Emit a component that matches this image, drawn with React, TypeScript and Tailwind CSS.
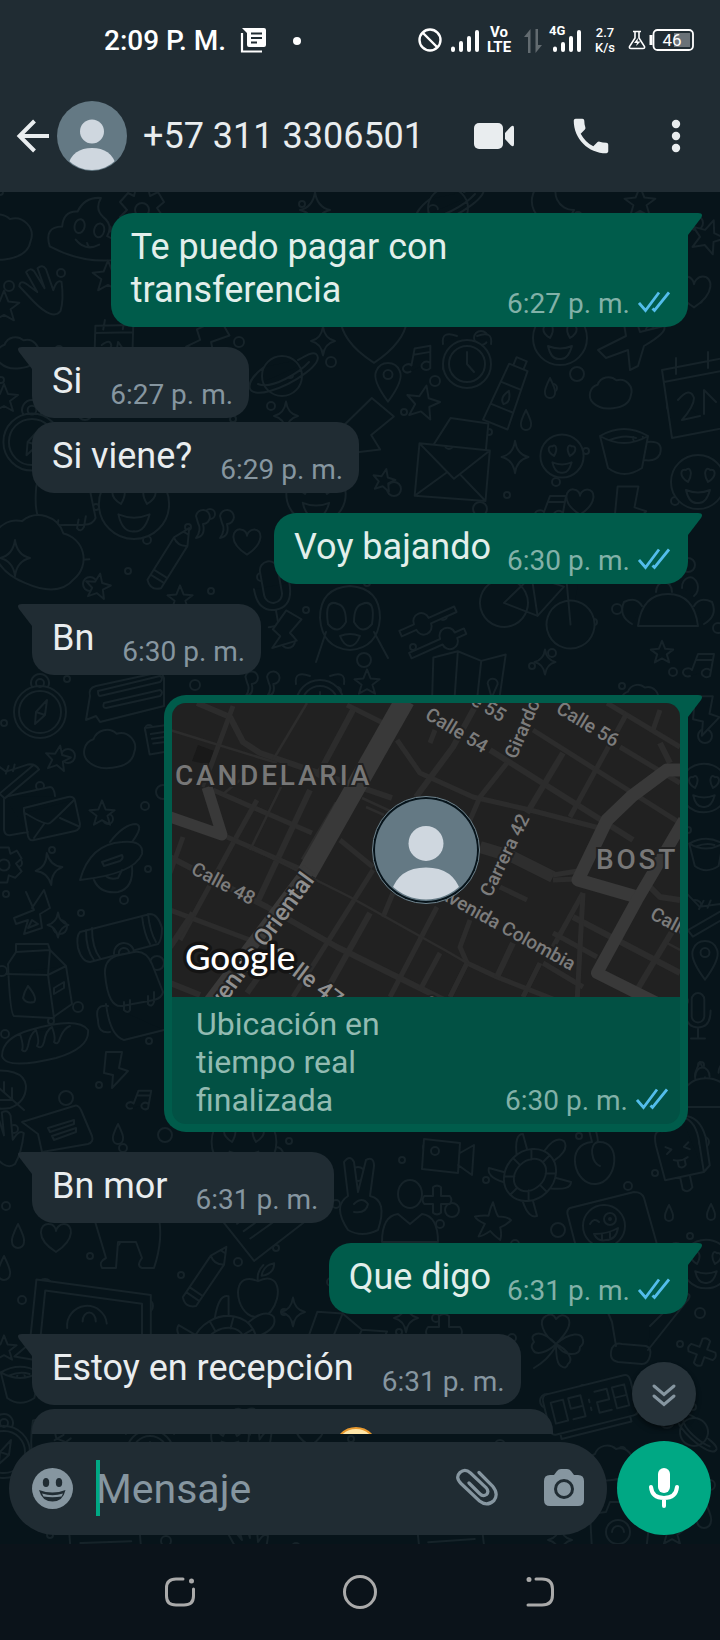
import React from "react";

/* ---------- chat wallpaper ---------- */

const shapes: Record<string, string> = {
  heart: "M0 14C-22 0-16-15-7-14C-2-14 0-9 0-7C0-9 3-14 8-14C17-14 20 1 0 14Z",
  star: "M0-14L4-4L14-3L6 3L9 13L0 8L-9 13L-6 3L-14-3L-4-4Z",
  starfish: "M0-22Q4-8 6-6Q16-6 20-2Q14 4 8 6Q10 14 8 20Q0 14-3 10Q-12 16-16 16Q-12 8-9 2Q-18-2-20-6Q-10-8-5-7Q-3-16 0-22Z",
  spark: "M0-18Q2-3 15 0Q2 3 0 18Q-2 3-15 0Q-2-3 0-18Z",
  drop: "M0-10Q6 2 5 5A5 5 0 0 1-5 5Q-6 2 0-10Z",
  cloud: "M-20 12A12 12 0 0 1-15-8A13 13 0 0 1 6-13A13 13 0 0 1 22 4Q20 16 2 18Q-12 20-20 12Z",
  planet:
    "M-20 0A20 20 0 1 1 20 0A20 20 0 1 1-20 0M-18-9C-40 8-36 22-12 15C12 8 44-14 34-22C30-25 22-19 16-16M-24 8C-10 14 18-4 27-14",
  envelope: "M-38-18L32-28L40 22L-30 34ZM-38-18L4 8L32-28M-30 34L-4 3M40 22L10 3M-24-20L-14-50L24-54L28-28",
  mail: "M-38-19L8-29Q12-29 13-20M-38-19V14Q-37 20-31 19L-14 16M-18-8L26-19Q32-20 33-15L38 8Q38 14 33 15L-8 24Q-13 25-14 20L-18-4Q-18-8-18-8ZM-17-3Q4 10 8 7Q12 4 32-16M-8 22L2 8M36 10L18 2",
  cup: "M-24-12Q0-26 24-12L18 20Q0 32-16 20ZM-24-12Q0 2 24-12M23-6Q40-8 36 6Q32 14 20 12M-14-8Q0-14 12-10",
  clock:
    "M-24 0A24 24 0 1 1 24 0A24 24 0 1 1-24 0M-18 0A18 18 0 1 1 18 0A18 18 0 1 1-18 0M0-12V0L7 8M-24-20Q-26-34-10-28M24-20Q26-34 10-28",
  smile:
    "M-27 0A27 27 0 1 1 27 0A27 27 0 1 1-27 0M-10 0C-20-6-17-14-12-12C-9-16-4-10-10 0M10 0C4-10 9-16 12-12C17-14 20-6 10 0M-12 8Q0 13 12 8Q8 22 0 21Q-9 22-12 8",
  wink: "M-21 0A21 21 0 1 1 21 0A21 21 0 1 1-21 0M-14-2Q-10-9-5-4M0-7A6 6 0 1 1 12-7A6 6 0 1 1 0-7M5-7A1 1 0 1 1 7-7A1 1 0 1 1 5-7M-10 8Q4 8 14 2Q12 14 2 14Q-6 16-10 8M-2 8V14M6 6V12",
  note: "M-10 8A5 4 0 1 1-8 2L-2-14H14L10 8A5 4 0 1 1 10 2M-4-8H13",
  pin: "M0 24Q-18 0-13-10A14 14 0 0 1 13-10Q18 0 0 24M-5-6A5 5 0 1 1 5-6A5 5 0 1 1-5-6",
  pencil: "M-8-24L0-40L8-24V26Q0 34-8 26ZM-8-24Q0-18 8-24M-8 14H8M-8 20H8M-3-34H3",
  tube: "M-9-30H9L12 26H-12ZM-5-30V-38H5V-30M-11 10H11M-10-12H10M0-7Q6 2 0 6Q-6 2 0-7",
  moon: "M8-22A22 22 0 1 0 22 8A18 18 0 0 1 8-22Z",
  plane: "M-32 8L-4-6L-8-30Q-2-38 4-28L10-10L34-16Q38-10 14 4L8 24L0 28L-2 8L-24 16Z",
  hand: "M-14 4L-24-14Q-22-20-17-15L-8-4L-14-26Q-9-30-6-25L0-6L-2-27Q4-30 6-24L8-2Q14-12 18-8Q16 10 10 20Q0 28-14 4Z",
  calendar: "M-32-22L30-34L40 34L-22 46ZM-30-10L32-22M-18-18V-34M14-24V-40M-16 8Q-4-6 0 6Q0 14-12 28L6 24M10 22V-2L22 10",
  bolt: "M-8-18H8L5-2L14 1L-2 18L-1 5L-10 3Z",
  bread: "M-42 14Q-42-4-14-12Q34-26 44-12Q46 6 12 16Q-38 28-42 14M-24-8Q-20 4-22 8Q-18 12-16 4Q-14-8-8-12Q-4 0-7 4Q-2 8 0 0Q2-12 8-15Q12-4 10 0Q14 4 16-4Q20-14 26-16",
  bag: "M-27-18Q-28-34-12-37L2-40Q14-42 20-28L31 0Q30 6 22 8L-10 14Q-24 16-27-18M-24 14Q-38 12-34 28Q-34 42-22 40M-26 12Q-22 44-8 48L32 38M-8 10V18Q-4 22-2 18V8M16 4V12Q20 16 22 10V0M-18-38A10 10 0 0 1 2-40M-13-38A5 5 0 0 1-3-40",
  roll: "M-40-8L30-26Q38-26 42-12Q42 0 38 4L-30 22Q-38 22-42 8Q-44-4-40-8M-34-10Q-34 10-26 20M-28-12Q-28 8-20 18M22-24Q24-6 30 4M28-26Q30-8 36 2",
  box: "M-26-20L-18-32L16-34L32-18L38 20L18 34L-20 32Q-24 30-26-20ZM-28-10L14-9L32-18M14-9L20 34M-18-32V-40H14L16-34M16-34L14-9M-6 2Q4 14 0 18Q-8 20-11 14Q-10 8-6 2M20 4L30-2V4L20 10Z",
  map: "M-36-18L-12-26L12-18L36-26L32 28L10 34L-12 26L-34 32ZM-12-26V26M12-18L10 34M20 4A5 5 0 1 1 30 4L25 18Z",
  bike: "M-58 12A24 24 0 1 1-10 12A24 24 0 1 1-58 12M12 12A24 24 0 1 1 60 12A24 24 0 1 1 12 12M-34 12L-16-22H18L2 14ZM36 12L18-30L30-34M-16-22L2 14M-26-30H-8",
  mic: "M-9-18A9 9 0 0 1 9-18V6A9 9 0 0 1-9 6ZM-18-2Q-18 22 0 22Q18 22 18-2M0 22V38M-10 38H10",
  camera: "M-28-14L-12-16L-8-26L12-26L16-14L32-12L28 24L-26 22ZM-12 4A12 12 0 1 1 12 4A12 12 0 1 1-12 4M-6 4A6 6 0 1 1 6 4",
  video: "M-24-18L12-14L10 16L-26 12ZM12-4L26-12L24 18L10 8M-17-6A4 4 0 1 1-9-6A4 4 0 1 1-17-6",
  turtle:
    "M-24 0A24 28 0 1 1 24 0A24 28 0 1 1-24 0M-14 0A14 18 0 1 1 14 0A14 18 0 1 1-14 0M-24 0H-14M24 0H14M0-28V-18M0 28V18M-17-19L-10-12M17-19L10-12M-17 19L-10 12M17 19L10 12M-7-28Q-10-46 0-48Q10-46 7-28M20-16L34-24Q40-18 24-5M20 16L34 24Q30 32 14 24M-20 16L-34 24Q-30 32-14 24M-20-16L-34-24Q-40-18-24-5",
  popsicle: "M-22 24L-24-16Q-24-34-14-30Q-10-44 4-42Q24-40 24-14L22 24ZM-5 24V38Q0 44 6 38V24M22 24L30 18L32-14Q30-40 10-42M-14-12L-8-8L-14-4M12-12L6-8L12-4M-8 4Q0 8 8 4M-4 6V12Q0 16 4 12V6",
  plum: "M-4-20C-32-18-22 24 0 22C22 20 26-22 2-20C-8-18-4 2 4 4M-4-20L-8-36Q0-40 2-20",
  apple: "M0-12C-26-24-28 10-12 24Q-4 30 0 26Q6 30 14 22C28 4 24-24 0-12M0-12Q-2-22 6-30M4-18Q18-20 18-32Q6-30 4-18",
  clover: "M0 0C-14-10-18-24-10-28Q-3-32 0-25Q6-32 12-26C16-20 10-10 0 0C14-12 26-12 27-4Q28 0 24 3Q24 10 16 10C8 10 4 6 0 0C12 6 18 16 12 20Q10 26 5 22Q0 20 0 0C-8 8-20 12-23 6Q-26 2-22-2Q-26-8-20-10C-14-12-6-6 0 0M0 2Q-8 16-22 24",
  dog: "M-30-10Q-34-34-10-36Q26-40 34-14Q40 10 30 40H18Q12 38 18 30L12 14H-6L-8 40H-22Q-26 34-18 30ZM-20-24L-14-18M34-14Q46-18 46-30",
  laptop: "M-56-44L48-30V30L-62 14ZM-48-34L40-22V20L-52 6ZM-28 0A18 18 0 1 1 8-4M-62 14L-76 26L30 44L48 30M-14-6A6 8 0 1 1-2-6",
  digital: "M-44-22H44Q50-22 50-14V18Q50 24 44 24H-44Q-50 24-50 18V-14Q-50-22-44-22M-42-12H-28V12H-42ZM-22-12H-8V0H-22ZM-8 0V12H-22M0-5V-2M0 4V7M8-12H22V0H8V12H22M28-12H42V12H28ZM28 0H42M-40 24V30H40V24",
  quote: "M-14-8A7 7 0 1 1-7 0Q-4 12-14 14Q-8 6-12-1ZM10-8A7 7 0 1 1 17 0Q20 12 10 14Q16 6 12-1Z",
  card: "M-32-20L26-28L34 14L-24 24ZM-22-10L16-16M-20-2L22-8M-18 6L12 2",
  chat: "M-34-4L-38 20L-28 16L-24 22L40 6V-22Q38-28 32-27L-28-14Q-36-12-34-4M-24-4L36-18Q40-22 36-24L-26-9Q-26-4-24-4M-18 8L36-4Q40-8 36-10L-20 3Q-22 8-18 8",
  note2: "M-40-2L12-18Q16-20 19-14L30 12Q32 18 26 20L-20 28L-24 10ZM-14 4L12-4V0L-12 8ZM-10 12L14 4V8L-8 16Z",
  rocket: "M-34 22Q-24-14 8-16Q30-18 28-4Q20 16-34 22M-4-16Q10-34 22-34Q30-32 18-16M-20 22Q-14 36 4 34Q20 30 18 8M-8 18Q-4 22 4 20L8 12M-12 4L8-3Q10 0 6 3L-10 8Z",
  rune: "M-6-18L2 0L-18 8L-16 14L-4 10L-8 24L10 18L8 4L18-2L12-20L0-2M-4 18L0 10L6 14Z",
  leaf: "M-26-16Q16-22 18-2Q18 14 2 20Q-10 22-22 18M-18-8L16 22M-4 4L-4-6M4 12V0M4 12H-8",
  sticker: "M-40-26L24-42Q32-42 34-36L48 14Q48 22 42 24L-18 42Q-26 42-28 36L-42-18Q-44-24-40-26",
  sliders: "M-30-8H-14A8 8 0 0 1 2-8H30V-2H2A8 8 0 0 1-14-2H-30ZM-30 16H4A8 8 0 0 1 20 16H30V22H20A8 8 0 0 1 4 22H-30Z",
  poop: "M-34 24Q-44 6-26 2Q-28-14-14-16Q-10-32 6-34Q2-22 12-16Q24-10 20 2Q40 6 32 24Q0 34-34 24M-14-2A5 7 0 1 1-4-2A5 7 0 1 1-14-2M6-2A5 7 0 1 1 16-2A5 7 0 1 1 6-2M-10 12Q2 22 14 12",
  gear: "M-6-22H6L8-14L16-18L22-8L15-2L22 8L14 16L6 13L4 22H-6L-8 13L-17 16L-22 7L-15 0L-22-8L-14-17L-8-14ZM-7 0A7 7 0 1 1 7 0A7 7 0 1 1-7 0",
  person: "M-12-18A12 14 0 1 1 12-18A12 14 0 1 1-12-18M-28 30Q-28 4-12 2L0 12L12 2Q28 4 28 30Z",
  monkey:
    "M-30-4Q-30-34 0-36Q30-34 30-4Q28 26 0 28Q-28 26-30-4M-22 2Q-26-24-12-18Q-4-16-4 0Q-12 14-22 2M22 2Q26-24 12-18Q4-16 4 0Q12 14 22 2M-10 14Q0 10 10 14Q6 24 0 24Q-6 24-10 14M-24 10L-34 40M24 10L38 36",
  compass:
    "M-26 0A26 26 0 1 1 26 0A26 26 0 1 1-26 0M-21 0A21 21 0 1 1 21 0A21 21 0 1 1-21 0M-5 12L-4 0L7-12L5 3ZM-4 0L5 3M-8-25A9 9 0 1 1 8-25M-4-29A4 4 0 1 1 4-29A4 4 0 1 1-4-29",
  salad: "M-30 10Q-26-22 0-22Q26-22 30 10ZM-36 8Q-50 0-44-14Q-32-20-26-10M36 8Q50 0 44-14Q32-20 26-10M-12-24A8 10 0 1 1 4-24M14-28A8 10 0 1 1 26-20",
  shoe: "M-30-24L-10-28L-4-4L26 8Q36 14 34 24H-30Q-34 0-30-24M-30 14H30M-6-2L4-8M4 2L12-4",
  peace: "M-14 34Q-30 10-14 0L-18-34Q-12-42-8-34L-4-4L4-36Q12-40 12-30L8 0Q26 4 16 34Q0 42-14 34M-8 8Q0 0 6 8Q4 18-8 16",
  glove: "M-20 18L-24-6L-36-34M12 22L50-26Q56-32 52-34Q48-36 14-2M-24 20Q-20 14-14 16L10 18Q16 20 14 28Q12 36 6 36L-18 34Q-28 32-24 20Z",
  cross: "M-5-16Q0-20 5-16V-5H16Q20 0 16 5H5V16Q0 20-5 16V5H-16Q-20 0-16-5H-5Z",
};

type Doodle = [string, number, number, number?, number?];

const doodles: Doodle[] = [
  ["cloud", 2, 44, 1.3], ["poop", 88, 38, 1, 12], ["gear", 142, 18], ["spark", 315, 18], ["planet", 448, 16], ["moon", 552, 10], ["star", 640, 10, 1.1],
  ["star", 708, 44, 1.2, 20], ["star", 108, 84, 1.1], ["hand", 46, 102, 1, -14], ["star", 4, 114, 1.1], ["heart", 694, 100, 1.1], ["calendar", 112, 150, 0.6, 10],
  ["cloud", 18, 160, 0.9], ["plane", 630, 150], ["smile", 560, 146], ["spark", 323, 149, 0.8], ["heart", 374, 140, 2.2], ["bolt", 206, 146, 1.2, 60],
  ["planet", 282, 184], ["note", 419, 170, 1, -10], ["clock", 467, 172], ["pin", 388, 188, 0.9], ["tube", 506, 206, 1.1, 22], ["drop", 550, 196], ["cloud", 611, 200, 0.9],
  ["calendar", 694, 200], ["star", 423, 210, 1.2, 12], ["star", 4, 206], ["spark", 286, 224, 0.8], ["bolt", 362, 240, 1.8, 40], ["drop", 526, 228], ["compass", 32, 250, 1.1],
  ["envelope", 452, 278, 1, 14], ["spark", 515, 265, 0.9], ["smile", 562, 264, 0.8], ["cup", 624, 256], ["star", 384, 288, 0.8, 12], ["smile", 698, 290], ["bag", 62, 320, 1.1, 10],
  ["smile", 316, 302, 1.1], ["heart", 580, 310, 0.9], ["note", 552, 318], ["bolt", 628, 318, 1.3], ["smile", 134, 312, 1.3], ["cloud", 40, 358, 2, 30],
  ["quote", 210, 332], ["heart", 247, 350, 0.9], ["pencil", 168, 370, 1, 32], ["spark", 15, 366], ["star", 98, 394, 0.9, 10], ["star", 180, 406, 0.9], ["mic", 272, 396, 1, -10],
  ["monkey", 350, 430, 1], ["bike", 540, 410, 1, 18], ["salad", 668, 424], ["sliders", 430, 434, 1, -24], ["bolt", 284, 440, 1.1, 30], ["map", 468, 486, 1, 4],
  ["spark", 545, 470, 0.7], ["star", 662, 460, 0.8], ["star", 367, 490, 0.9], ["quote", 258, 492, 0.9], ["clock", 320, 512], ["cloud", 640, 506, 0.8], ["note", 700, 476],
  ["compass", 40, 520], ["chat", 124, 508], ["cloud", 110, 556, 1.1], ["star", 58, 566, 0.9, 10], ["card", 164, 548, 0.6], ["mail", 42, 624], ["star", 102, 621, 0.9], ["shoe", 10, 580, 0.7, -40],
  ["gear", 4, 673, 0.8], ["spark", 49, 677, 0.9, -8], ["rocket", 114, 666], ["rune", 32, 718], ["spark", 58, 733, 0.7], ["roll", 120, 748], ["box", 34, 792], ["bag", 132, 800],
  ["bread", 44, 850], ["bolt", 114, 878], ["leaf", 8, 896], ["note", 140, 910, 0.8], ["note2", 62, 932], ["drop", 118, 942], ["hand", 4, 950, 1.1],
  ["bolt", 704, 524, 1.1], ["smile", 704, 596, 0.9], ["cup", 706, 660, 0.7], ["shoe", 704, 716, 0.8, -30], ["pin", 705, 766, 0.9],
  ["mic", 698, 820, 0.7], ["drop", 700, 880], ["salad", 706, 906, 0.9], ["smile", 244, 950, 1.2], ["video", 448, 965], ["turtle", 530, 983, 1, 45], ["plum", 596, 970],
  ["popsicle", 680, 963, 0.9, -12], ["peace", 362, 1004], ["person", 410, 1020], ["cross", 437, 1008, 0.8], ["starfish", 493, 1030, 0.9], ["sticker", 610, 1042], ["wink", 604, 1034],
  ["drop", 669, 1021, 0.8], ["drop", 711, 1020, 0.8], ["card", 266, 1030, 1.2, -28], ["heart", 56, 1046], ["dog", 124, 1036], ["drop", 18, 1044, 1.2], ["drop", 4, 1076, 1.2],
  ["pencil", 204, 1088, 1, 34], ["apple", 258, 1100, 0.9], ["spark", 293, 1120, 0.8], ["laptop", 98, 1136, 1.1], ["star", 4, 1156, 0.9], ["turtle", 224, 1154, 1.2, 60],
  ["map", 344, 1150, 1, 22], ["spark", 406, 1126, 0.8], ["cross", 444, 1140], ["clover", 556, 1152], ["glove", 636, 1136], ["smile", 706, 1072, 0.9], ["cross", 702, 1160, 0.8, 20],
  ["cup", 20, 1190, 0.8], ["planet", 694, 1240, 0.7, 70], ["compass", 4, 1260], ["shoe", 60, 1250, 0.9], ["clock", 150, 1262], ["hand", 250, 1250, 1.2], ["heart", 310, 1240],
  ["smile", 230, 1244, 0.7], ["cloud", 610, 1270], ["digital", 590, 1212, 0.9, -14], ["camera", 618, 1336], ["star", 672, 1340, 0.9], ["hand", 250, 1352], ["card", 104, 1356, 1.2, 6],
  ["drop", 704, 1322, 1.4], ["card", 450, 1354, 1.1, 4], ["spark", 560, 1348, 0.8],
];

const dots = Array.from({ length: 330 }, (_, i) => ({
  x: (i * 137 + ((i * i * 7) % 41)) % 720,
  y: Math.round(i * 4.1) + ((i * 53) % 17),
  r: [3, 4, 3, 5, 4, 7][i % 6],
}));

function Wallpaper() {
  return (
    <svg
      aria-hidden="true"
      className="pointer-events-none absolute inset-0 size-full"
      viewBox="0 0 720 1352"
      preserveAspectRatio="xMidYMin slice"
      fill="#07141a"
      stroke="#162329"
      strokeWidth="2"
      strokeLinejoin="round"
      strokeLinecap="round"
    >
      {dots.map((b, i) => (
        <circle key={i} cx={b.x} cy={b.y} r={b.r} />
      ))}
      {doodles.map(([name, x, y, s = 1, r = 0], i) => (
        <path key={i} d={shapes[name]} transform={`translate(${x} ${y}) rotate(${r}) scale(${s})`} vectorEffect="non-scaling-stroke" />
      ))}
    </svg>
  );
}

/* ---------- header ---------- */

function StatusBar() {
  return (
    <div className="flex h-20 items-center justify-between pl-[104px] pr-[25px] text-white">
      <div className="flex items-center pt-0.5">
        <span className="text-[28px] font-medium leading-8">2:09 P. M.</span>
        <svg className="ml-3.5 h-7 w-7" viewBox="0 0 28 28" fill="none">
          <path d="M2 6V24.500H22" stroke="#fff" strokeWidth="2.200" />
          <path d="M2 1H24Q26 1 26 3V18Q26 20 24 20H9Q7 20 7 18V6Z" fill="#fff" />
          <path d="M11 6.500H22M11 11H22M11 15.500H17" stroke="#202c33" strokeWidth="2" />
        </svg>
        <span className="ml-[25px] size-2 rounded-full bg-white" />
      </div>
      <div className="flex items-center">
        <svg className="h-8 w-16" viewBox="418 24 64 32" fill="none" stroke="#fff">
          <circle cx="430" cy="40" r="10.500" strokeWidth="2.400" />
          <path d="M422.500 32.500L437.500 47.500" strokeWidth="2.400" />
          <path d="M453 48.500V50M461 43V50M469 38V50M477 32V50" strokeWidth="4" strokeLinecap="round" />
        </svg>
        <span className="ml-1 flex w-[26px] flex-col text-center text-[15px] font-bold leading-[15px]">
          <span>Vo</span>
          <span>LTE</span>
        </span>
        <svg className="ml-3 h-8 w-[18px]" viewBox="524 24 18 32" fill="#626b70">
          <path d="M524 37L530.500 29V53H528V37Z" />
          <path d="M542 45L535.500 53V29H538V45Z" />
        </svg>
        <svg className="ml-2 h-8 w-8 overflow-visible" viewBox="550 24 32 32" fill="none" stroke="#fff">
          <path d="M555 48.500V50M563 44V50M571 38V50M579 32V50" strokeWidth="4" strokeLinecap="round" />
          <text x="549" y="35" fill="#fff" stroke="none" className="text-[13px] font-bold">4G</text>
        </svg>
        <span className="ml-3 flex w-[22px] flex-col text-center text-[13px] font-medium leading-[15px]">
          <span>2.7</span>
          <span>K/s</span>
        </span>
        <svg className="ml-3 h-6 w-[67px]" viewBox="629 28 67 24" fill="none" stroke="#fff">
          <path d="M634 31.500H642M636 32V38L630.500 46.500Q630 48.500 632 48.500H644Q646 48.500 645.500 46.500L640 38V32" strokeWidth="1.600" />
          <path d="M639 38L635 43H638L637 46L641.500 41.500H638.500Z" fill="#fff" stroke="none" />
          <path d="M652 35V45" strokeWidth="3" />
          <rect x="675" y="33" width="16" height="14" fill="#6a7278" stroke="none" />
          <rect x="654.500" y="30" width="39.500" height="20" rx="4" strokeWidth="1.800" />
          <text x="673" y="46" textAnchor="middle" fill="#fff" stroke="none" className="text-[17px]">46</text>
        </svg>
      </div>
    </div>
  );
}

function AvatarArt({ className }: { className: string }) {
  return (
    <svg className={className} viewBox="0 0 70 70" aria-hidden="true">
      <defs>
        <clipPath id="avatar-disc">
          <circle cx="35" cy="35" r="34" />
        </clipPath>
      </defs>
      <circle cx="35" cy="35" r="35" fill="#647984" />
      <circle cx="35" cy="30.500" r="12" fill="#cfd7df" />
      <path d="M11 64Q16 47 35 47T59 64V70H11Z" fill="#cfd7df" clipPath="url(#avatar-disc)" />
    </svg>
  );
}

function Header() {
  return (
    <header className="relative z-10 bg-[#202c33]">
      <StatusBar />
      <div className="flex h-28 items-center pl-4 pr-[38px] text-[#e9edef]">
        <button aria-label="Atrás" className="flex items-center">
          <svg className="h-9 w-[34px]" viewBox="0 0 34 36" fill="none" stroke="#e9edef" strokeWidth="4">
            <path d="M33 18H4M18.500 3L3.500 18L18.500 33" />
          </svg>
        </button>
        <AvatarArt className="ml-[7px] size-[70px] shrink-0" />
        <h1 className="ml-4 flex-1 whitespace-nowrap text-[36px] font-normal leading-[44px]">+57 311 3306501</h1>
        <button aria-label="Videollamada">
          <svg className="h-[26px] w-10" viewBox="0 0 40 26" fill="#e9edef">
            <rect width="29" height="26" rx="5" />
            <path d="M31 10L36.500 4Q40 1 40 5V21Q40 25 36.500 22L31 16Z" />
          </svg>
        </button>
        <button aria-label="Llamar" className="ml-[54px]">
          <svg className="size-[46px]" viewBox="0 0 24 24" fill="#e9edef">
            <path d="M6.620 10.790c1.440 2.830 3.760 5.140 6.590 6.590l2.200-2.200c.27-.27.67-.36 1.020-.24 1.120.37 2.330.57 3.570.57.55 0 1 .45 1 1V20c0 .55-.45 1-1 1-9.390 0-17-7.610-17-17 0-.55.45-1 1-1h3.500c.55 0 1 .45 1 1 0 1.250.2 2.450.57 3.570.11.35.03.74-.25 1.020l-2.200 2.200z" />
          </svg>
        </button>
        <button aria-label="Más opciones" className="ml-[56px]">
          <svg className="h-9 w-3" viewBox="0 0 12 36" fill="#e9edef">
            <circle cx="6" cy="6" r="4.200" />
            <circle cx="6" cy="18" r="4.200" />
            <circle cx="6" cy="30" r="4.200" />
          </svg>
        </button>
      </div>
    </header>
  );
}

/* ---------- messages ---------- */

function Ticks() {
  return (
    <svg className="mb-1 ml-2 h-6 w-8" viewBox="0 0 32 24" fill="none" stroke="#53bdeb" strokeWidth="2.800" aria-label="Leído">
      <path d="M1 13L7.500 20.500L21 2.500" />
      <path d="M14.500 18.500L16.500 20.500L31 2.500" />
    </svg>
  );
}

function Tail({ out }: { out: boolean }) {
  return out ? (
    <svg className="absolute -right-3.5 top-0 h-[22px] w-9" viewBox="0 0 36 22" fill="#005c4b" aria-hidden="true">
      <path d="M0 0H32Q38 0 35 5L22 22H0Z" />
    </svg>
  ) : (
    <svg className="absolute -left-3.5 top-0 h-[22px] w-9" viewBox="0 0 36 22" fill="#202c33" aria-hidden="true">
      <path d="M36 0H4Q-2 0 1 5L14 22H36Z" />
    </svg>
  );
}

function Time({ value, out }: { value: string; out: boolean }) {
  return (
    <span className={`flex shrink-0 items-center text-[28px] leading-8 ${out ? "text-[#82b1a8]" : "text-[#8696a0]"}`}>
      {value}
      {out && <Ticks />}
    </span>
  );
}

function Message({ text, time, out = false, first = true }: { text: string; time: string; out?: boolean; first?: boolean }) {
  return (
    <li className={`flex ${out ? "justify-end" : "justify-start"} ${first ? "mt-5" : "mt-1"}`}>
      <div
        className={`relative flex max-w-[88%] items-end justify-between rounded-[22px] pb-[7px] pl-5 pt-[13px] ${
          out ? "gap-4 bg-[#005c4b] pr-[18px] text-[#e2efeb]" : "gap-7 bg-[#202c33] pr-4 text-[#e9edef]"
        }`}
      >
        {first && <Tail out={out} />}
        <p className="relative pb-2 text-[36px] leading-[43px]">{text}</p>
        <Time value={time} out={out} />
      </div>
    </li>
  );
}

const minor = [
  "M25 0L58 14L71 39L88 50L220 95", "M61 3L40 60L30 84", "M175 2L211 20", "M181 7L145 74", "M225 37L248 70L301 94L358 107L435 127",
  "M258 40L263 27", "M305 0L281 44L244 94", "M41 87L140 130", "M85 97L61 140L8 237", "M138 87L85 200", "M165 100L131 157",
  "M55 134L131 167", "M-2 154L95 204L165 244L278 300", "M-2 207L78 237", "M11 134L-2 170", "M21 210L-2 244", "M168 137L201 164",
  "M201 167L121 294", "M198 210L151 294", "M265 204L218 294", "M221 190L211 214", "M-2 280L28 292", "M435 0L508 44", "M361 27L508 120",
  "M318 47L461 137", "M448 44L508 80", "M335 60L308 94L298 117", "M391 50L355 110", "M455 10L398 114", "M488 7L481 27", "M488 40L498 60",
  "M328 184L355 197", "M411 190L381 244", "M401 214L508 270", "M381 230L425 254", "M371 260L411 284", "M501 227L465 287",
  "M298 217L288 244L295 260L325 274L381 296", "M295 260L278 294", "M341 240L325 274", "M368 260L351 294", "M268 250L248 287",
  "M478 184L488 194L508 197", "M381 177L405 176", "M411 190L405 300", "M75 290L100 255",
];
const thin = ["M-2 27L105 60", "M135 0L101 57", "M111 80L78 147", "M78 144L178 194L278 250L295 260", "M68 77L50 92", "M190 95L218 108", "M194 104L212 112", "M495 240L508 247"];

function MapArt() {
  const label = "fill-[#7c7c7c] text-[19px] font-medium";
  const halo = { stroke: "#212121", strokeWidth: 4, paintOrder: "stroke" as const };
  return (
    <svg className="block w-full" viewBox="0 0 508 294" role="img" aria-label="Mapa">
      <rect width="508" height="294" fill="#212121" />
      <path d="M26 42L42 48L38 62L20 58Z" fill="#191919" />
      <g fill="none" strokeLinejoin="round">
        {minor.map((d, i) => (
          <path key={i} d={d} stroke="#2c2c2c" strokeWidth={i % 3 ? 5 : 6} />
        ))}
        {thin.map((d, i) => (
          <path key={i} d={d} stroke="#2c2c2c" strokeWidth="2.500" />
        ))}
        <path d="M308 144L341 154L381 174" stroke="#2e2e2e" strokeWidth="12" />
        <path d="M381 172L406 168" stroke="#2e2e2e" strokeWidth="5" />
        <path d="M233 -3L135 170" stroke="#393939" strokeWidth="20" />
        <path d="M137 166L38 298" stroke="#393939" strokeWidth="13" />
        <path d="M35 84L50 132L-2 114" stroke="#393939" strokeWidth="11" />
        <path d="M510 67H495L460 93L435 117L406 177L465 194" stroke="#393939" strokeWidth="13" />
        <path d="M512 117L465 197L425 270L485 300" stroke="#393939" strokeWidth="12" />
      </g>
      <g {...halo}>
        <text transform="translate(252 15) rotate(31)" className={label}>Calle 54</text>
        <text transform="translate(383 9) rotate(31)" className={label}>Calle 56</text>
        <text transform="translate(270 -16) rotate(31)" className={label}>Calle 55</text>
        <text transform="translate(344 57) rotate(-67)" className={label}>Girardot</text>
        <text transform="translate(319 195) rotate(-64)" className={label}>Carrera 42</text>
        <text transform="translate(399 268) rotate(29)" textAnchor="end" className={label}>Avenida Colombia</text>
        <text transform="translate(477 215) rotate(28)" className={label}>Calle 50</text>
        <text transform="translate(250 303) rotate(30)" className={label}>Calle 45</text>
        <text transform="translate(18 170) rotate(28)" className={label}>Calle 48</text>
        <text transform="translate(143 177) rotate(-54)" textAnchor="end" className="fill-[#8f8f8f] text-[24px] font-medium">Avenida Oriental</text>
        <text transform="translate(97 255) rotate(37)" className="fill-[#8f8f8f] text-[23px] font-medium">Calle 47</text>
        <text x="3" y="82" className="fill-[#777777] text-[28px] font-medium tracking-widest">CANDELARIA</text>
        <text x="424" y="166" className="fill-[#777777] text-[28px] font-medium tracking-widest">BOST</text>
      </g>
      <text x="13" y="267" stroke="#141414" strokeWidth="7" strokeLinejoin="round" paintOrder="stroke" className="fill-white font-['Lato'] text-[35px] font-medium">
        Google
      </text>
    </svg>
  );
}

function LocationMessage() {
  return (
    <li className="mt-5 flex justify-end">
      <div className="relative w-[524px] max-w-[88%] rounded-[22px] bg-[#005c4b] p-2">
        <Tail out />
        <div className="relative overflow-hidden rounded-[14px] bg-[#025144]">
          <div className="relative">
            <MapArt />
            <div className="absolute inset-0 flex items-center justify-center">
              <div className="rounded-full border border-[#71858f] bg-[#06131a] p-0.5">
                <AvatarArt className="size-[102px]" />
              </div>
            </div>
          </div>
          <div className="flex items-end justify-between pb-[5px] pl-6 pr-3 pt-2">
            <p className="w-[200px] text-[32px] leading-[38px] text-[#92bbb2]">Ubicación en tiempo real finalizada</p>
            <div className="pb-0.5">
              <Time value="6:30 p. m." out />
            </div>
          </div>
        </div>
      </div>
    </li>
  );
}

function EmojiMessage() {
  return (
    <li className="mt-1 flex">
      <div className="rounded-[22px] bg-[#202c33] pb-4 pl-[302px] pr-[175px] pt-[18px]">
        <svg className="size-11" viewBox="0 0 44 44" role="img" aria-label="Emoji">
          <circle cx="22" cy="22" r="21" fill="#ffe6a8" stroke="#e8992e" strokeWidth="2" />
        </svg>
      </div>
    </li>
  );
}

/* ---------- composer ---------- */

function Composer() {
  return (
    <form className="relative flex items-center gap-2.5 px-[9px] pb-[9px] pt-[7px]" onSubmit={(e) => e.preventDefault()}>
      <div className="flex h-[93px] min-w-0 flex-1 items-center rounded-full bg-[#202c33] pl-[23px] pr-[23px]">
        <button type="button" aria-label="Emojis" className="shrink-0">
          <svg className="size-[41px]" viewBox="0 0 41 41">
            <circle cx="20.500" cy="20.500" r="20.500" fill="#8696a0" />
            <ellipse cx="14" cy="14.500" rx="3.200" ry="4.500" fill="#202c33" />
            <ellipse cx="27" cy="14.500" rx="3.200" ry="4.500" fill="#202c33" />
            <path d="M7 22Q20.500 27 33.500 22Q31 33.500 20.500 33.500T7 22Z" fill="#202c33" />
            <path d="M10 25.500Q20.500 29 31 25.500L29.500 28.500Q20.500 30 11.500 28.500Z" fill="#8696a0" />
          </svg>
        </button>
        <span className="ml-[23px] h-14 w-1 shrink-0 bg-[#00a884]" aria-hidden="true" />
        <input
          aria-label="Mensaje"
          placeholder="Mensaje"
          className="-ml-1 h-[50px] min-w-0 flex-1 bg-transparent pt-0.5 text-[41px] leading-[48px] text-[#e9edef] outline-none placeholder:text-[#8696a0] placeholder:opacity-100"
        />
        <button type="button" aria-label="Adjuntar" className="shrink-0">
          <svg className="size-[42px]" viewBox="0 0 42 42" fill="none" stroke="#8696a0" strokeWidth="3.200" strokeLinecap="round">
            <path d="M23 5.500L36.500 19Q43 27 38 33.500Q31 40 23.500 34L5 16.500Q-1 10.500 4 5.500Q9 1 14.500 6L30 20.500Q33.500 24.500 30.500 27.500Q27 30 23.500 26.500L13 16" />
          </svg>
        </button>
        <button type="button" aria-label="Cámara" className="ml-[46px] shrink-0">
          <svg className="h-[38px] w-10" viewBox="0 0 40 38">
            <path d="M6 6H10L13 2Q14.500 0 17 0H23Q25.500 0 27 2L30 6H34Q40 6 40 12V31Q40 37 34 37H6Q0 37 0 31V12Q0 6 6 6Z" fill="#8696a0" />
            <circle cx="20" cy="20" r="8.500" fill="#8696a0" stroke="#202c33" strokeWidth="3" />
          </svg>
        </button>
      </div>
      <button type="button" aria-label="Nota de voz" className="flex size-[94px] shrink-0 items-center justify-center rounded-full bg-[#00a884]">
        <svg className="h-[42px] w-[30px]" viewBox="0 0 30 42" fill="none" stroke="#fff">
          <rect x="9" y="1" width="12" height="25" rx="6" fill="#fff" stroke="none" />
          <path d="M2 20Q3 31 15 31T28 20M15 31V39" strokeWidth="4" strokeLinecap="round" />
        </svg>
      </button>
    </form>
  );
}

function NavBar() {
  return (
    <nav className="grid h-24 grid-cols-3 items-center justify-items-center bg-[#0b131a] px-[12.5%]">
      <button aria-label="Recientes">
        <svg className="size-8" viewBox="0 0 32 32" fill="none" stroke="#aaaaaa" strokeWidth="3" strokeLinecap="round">
          <path d="M19 3H12Q2.500 3 2.500 12V20Q2.500 29 12 29H20Q29.500 29 29.500 20V13" />
          <circle cx="27.500" cy="5" r="1" fill="#aaaaaa" />
        </svg>
      </button>
      <button aria-label="Inicio">
        <svg className="size-9" viewBox="0 0 36 36" fill="none" stroke="#aaaaaa" strokeWidth="3">
          <circle cx="18" cy="18" r="15.500" />
        </svg>
      </button>
      <button aria-label="Volver">
        <svg className="size-8" viewBox="0 0 32 32" fill="none" stroke="#aaaaaa" strokeWidth="3" strokeLinecap="round">
          <path d="M12 3H18Q28.500 3 28.500 13V19Q28.500 29 18 29H4" />
          <circle cx="5" cy="3.500" r="1" fill="#aaaaaa" />
        </svg>
      </button>
    </nav>
  );
}

export default function App() {
  return (
    <div className="flex h-screen flex-col bg-[#07141a] font-['Roboto',sans-serif]">
      <Header />
      <div className="relative flex min-h-0 flex-1 flex-col overflow-hidden">
        <Wallpaper />
        <main className="relative min-h-0 flex-1 overflow-hidden">
          <ul className="flex flex-col px-8 pt-px">
            <Message out text="Te puedo pagar con transferencia" time="6:27 p. m." />
            <Message text="Si" time="6:27 p. m." />
            <Message first={false} text="Si viene?" time="6:29 p. m." />
            <Message out text="Voy bajando" time="6:30 p. m." />
            <Message text="Bn" time="6:30 p. m." />
            <LocationMessage />
            <Message text="Bn mor" time="6:31 p. m." />
            <Message out text="Que digo" time="6:31 p. m." />
            <Message text="Estoy en recepción" time="6:31 p. m." />
            <EmojiMessage />
          </ul>
          <button
            aria-label="Ir al final"
            className="absolute bottom-2 right-6 flex size-16 items-center justify-center rounded-full bg-[#27333a] shadow-md shadow-black/40"
          >
            <svg className="size-7" viewBox="0 0 28 28" fill="none" stroke="#8696a0" strokeWidth="3" strokeLinecap="round">
              <path d="M4 6L14 14.500L24 6M4 16L14 24.500L24 16" />
            </svg>
          </button>
        </main>
        <Composer />
      </div>
      <NavBar />
    </div>
  );
}
